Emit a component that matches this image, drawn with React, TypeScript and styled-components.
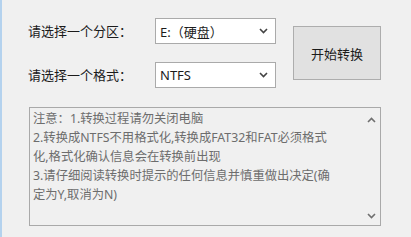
import React from "react";
import styled, { createGlobalStyle } from "styled-components";

const Global = createGlobalStyle`
  html, body { margin: 0; padding: 0; background: #f0f0f0; }
  body { font-family: "Noto Sans", "Noto Sans CJK SC", sans-serif; }
  * { box-sizing: border-box; }
`;

const Window = styled.div`
  width: 411px;
  height: 237px;
  background: #f0f0f0;
  border-left: 2px solid #b4d2ee;
  padding: 18px 0 0 26px;
  font-family: "Noto Sans", "Noto Sans CJK SC", sans-serif;
  font-size: 13px;
  color: #1b1b1b;
`;

const Top = styled.div`
  display: flex;
  align-items: center;
`;

const Form = styled.div`
  display: flex;
  flex-direction: column;
  gap: 18px;
`;

const Row = styled.div`
  display: flex;
  align-items: center;
  height: 26px;
`;

const Label = styled.span`
  width: 127px;
  line-height: 26px;
  white-space: nowrap;
`;

const Select = styled.div`
  width: 121px;
  height: 26px;
  background: #ffffff;
  border: 1px solid #aaaaaa;
  display: flex;
  align-items: center;
  justify-content: space-between;
  padding: 0 7px 0 4px;
  white-space: nowrap;
`;

const Button = styled.div`
  margin-left: 17px;
  width: 88px;
  height: 54px;
  background: #e1e1e1;
  border: 1px solid #adadad;
  display: flex;
  align-items: center;
  justify-content: center;
  color: #1b1b1b;
`;

const Notes = styled.div`
  margin: 19px 0 0 1px;
  width: 352px;
  height: 119px;
  border: 1px solid #a9a9a9;
  background: #f0f0f0;
  display: flex;
`;

const NotesText = styled.div`
  flex: 1;
  padding: 1px 0 0 3px;
  color: #6d6d6d;
  font-size: 12.3px;
  line-height: 19px;
`;

const Line = styled.div`
  white-space: nowrap;
`;

const Scroll = styled.div`
  width: 17px;
  display: flex;
  flex-direction: column;
  justify-content: space-between;
  align-items: center;
  padding: 9px 0 6px;
`;

const Chevron = ({ up, color }: { up?: boolean; color: string }) => (
  <svg width="9" height="6" viewBox="0 0 9 6">
    <path
      d={up ? "M1 5 L4.5 1.5 L8 5" : "M1 1 L4.5 4.5 L8 1"}
      fill="none"
      stroke={color}
      strokeWidth="1.6"
    />
  </svg>
);

export default function App() {
  return (
    <>
      <Global />
      <Window>
        <Top>
          <Form>
            <Row>
              <Label>请选择一个分区：</Label>
              <Select>
                <span>E:（硬盘）</span>
                <Chevron color="#444" />
              </Select>
            </Row>
            <Row>
              <Label>请选择一个格式：</Label>
              <Select>
                <span>NTFS</span>
                <Chevron color="#444" />
              </Select>
            </Row>
          </Form>
          <Button>开始转换</Button>
        </Top>
        <Notes>
          <NotesText>
            <Line>注意：1.转换过程请勿关闭电脑</Line>
            <Line>2.转换成NTFS不用格式化,转换成FAT32和FAT必须格式</Line>
            <Line>化,格式化确认信息会在转换前出现</Line>
            <Line>3.请仔细阅读转换时提示的任何信息并慎重做出决定(确</Line>
            <Line>定为Y,取消为N)</Line>
          </NotesText>
          <Scroll>
            <Chevron up color="#6f6f6f" />
            <Chevron color="#6f6f6f" />
          </Scroll>
        </Notes>
      </Window>
    </>
  );
}
